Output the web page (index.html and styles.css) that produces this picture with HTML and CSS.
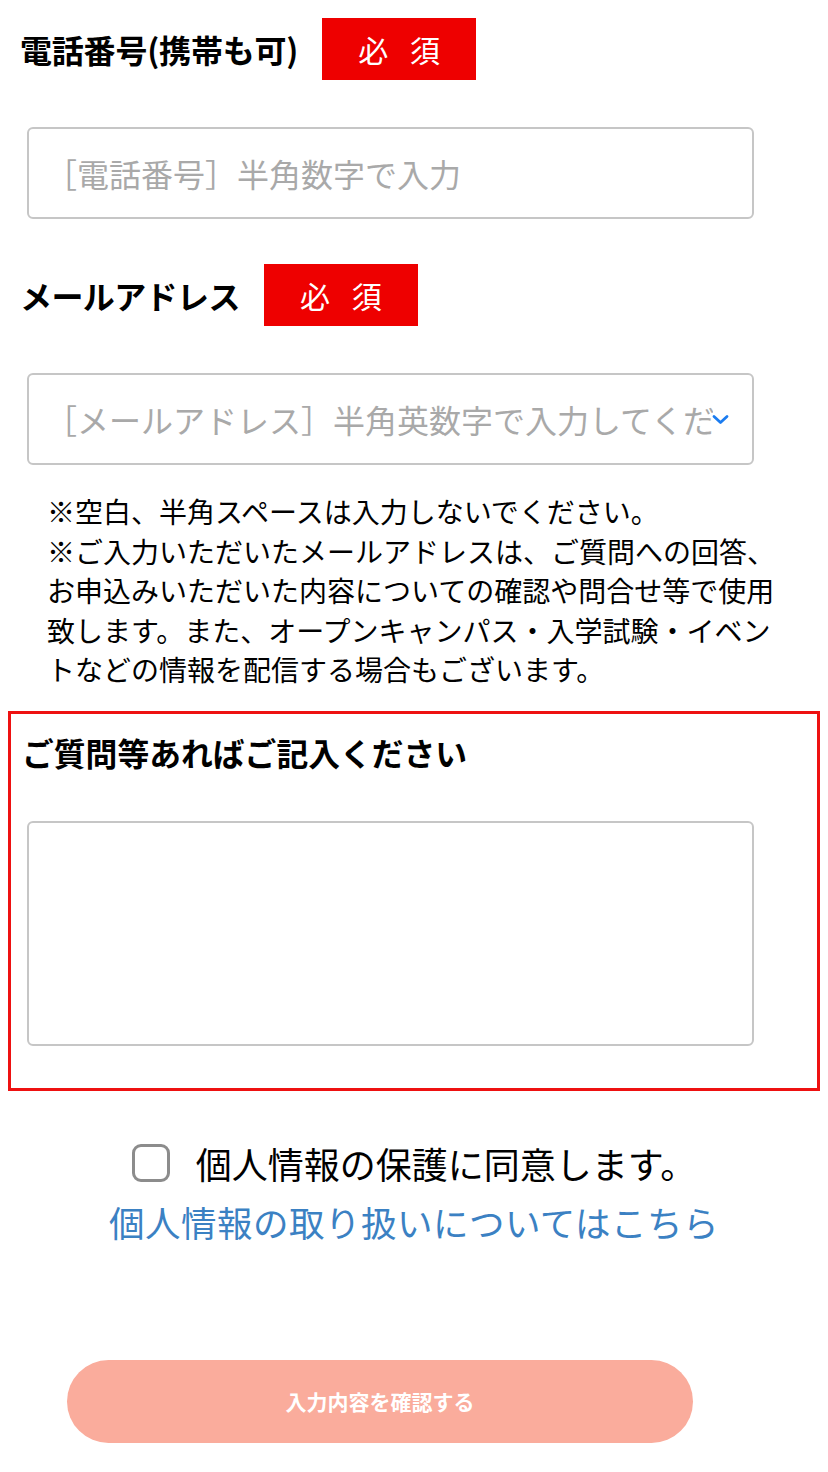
FILE: index.html
```html
<!DOCTYPE html>
<html lang="ja">
<head>
  <meta charset="UTF-8">
  <title>お問い合わせフォーム</title>
  <link rel="stylesheet" href="styles.css">
</head>
<body>

<form class="entry_form">

  <!-- 電話番号 -->
  <div class="item_head">
    <h4 class="item_label">電話番号(携帯も可)</h4>
    <span class="badge_req">必 須</span>
  </div>
  <div class="input_box">
    <span class="placeholder">［電話番号］半角数字で入力</span>
  </div>

  <!-- メールアドレス -->
  <div class="item_head second">
    <h4 class="item_label">メールアドレス</h4>
    <span class="badge_req">必 須</span>
  </div>
  <div class="input_box select_box">
    <span class="placeholder">［メールアドレス］半角英数字で入力してください</span>
    <svg class="chevron" width="17" height="11" viewBox="0 0 17 11"><path d="M2 2.5 L8.5 8.5 L15 2.5" fill="none" stroke="#1b7cf0" stroke-width="2.8" stroke-linecap="round" stroke-linejoin="round"/></svg>
  </div>
  <p class="note">
    <span>※空白、半角スペースは入力しないでください。</span>
    <span>※ご入力いただいたメールアドレスは、ご質問への回答、</span>
    <span>お申込みいただいた内容についての確認や問合せ等で使用</span>
    <span>致します。また、オープンキャンパス・入学試験・イベン</span>
    <span>トなどの情報を配信する場合もございます。</span>
  </p>

  <!-- ご質問 -->
  <div class="question_area">
    <h4 class="question_title">ご質問等あればご記入ください</h4>
    <div class="textarea_box"></div>
  </div>

  <!-- 同意 -->
  <div class="agree_row">
    <span class="check"></span>
    <span class="agree_text">個人情報の保護に同意します。</span>
  </div>
  <p class="privacy_link"><a href="#">個人情報の取り扱いについてはこちら</a></p>

  <button type="button" class="btn_confirm">入力内容を確認する</button>
</form>

</body>
</html>
```

FILE: styles.css
```css
body { margin: 0; background: #fff; color: #000; font-family: "Noto Sans CJK JP", "Noto Sans", sans-serif; }
.entry_form { width: 828px; padding-bottom: 30px; }

.item_head { display: flex; align-items: center; gap: 24px; height: 62px; margin-top: 18px; padding-left: 20px; }
.item_head.second { margin-top: 45px; }
.item_label { margin: 0; font-size: 32px; font-weight: bold; line-height: 40px; letter-spacing: -0.2px; }
.item_head.second .item_label { letter-spacing: -0.6px; }
.badge_req { display: flex; align-items: center; justify-content: center; width: 154px; height: 62px; background: #ee0000; color: #fff; font-size: 30px; word-spacing: 15px; line-height: 1; }

.input_box { box-sizing: border-box; display: flex; align-items: center; width: 727px; height: 92px; margin: 47px 0 0 27px; padding: 0 16px; border: 2px solid #c6c6c6; border-radius: 6px; }
.placeholder { flex: 1; white-space: nowrap; color: #a9a9a9; font-size: 32px; line-height: 48px; }
.select_box .placeholder { flex: none; width: 668px; overflow: hidden; }
.chevron { flex: none; margin-left: -1px; }

.note { margin: 27px 0 0; padding-left: 47px; font-size: 28px; line-height: 39.5px; }
.note span { display: block; white-space: nowrap; }

.question_area { margin: 21px 8px 0; padding: 18px 0 42px 11px; border: 3px solid #ee1111; }
.question_title { margin: 0; font-size: 31.8px; font-weight: bold; line-height: 40px; }
.textarea_box { box-sizing: border-box; width: 727px; height: 225px; margin: 49px 0 0 5px; border: 2px solid #c6c6c6; border-radius: 6px; }

.agree_row { display: flex; align-items: center; justify-content: center; gap: 26px; margin-top: 50px; height: 44px; }
.check { box-sizing: border-box; width: 38px; height: 38px; border: 3px solid #8c8c8c; border-radius: 9px; }
.agree_text { font-size: 36px; line-height: 44px; }
.privacy_link { margin: 15px 0 0; text-align: center; font-size: 35.5px; line-height: 44px; }
.privacy_link a { color: #3b81c3; text-decoration: none; letter-spacing: 0.5px; }

.btn_confirm { display: block; width: 626px; height: 83px; margin: 116px 0 0 67px; border: none; border-radius: 42px; background: #faac9c; color: #fff; font-family: inherit; font-size: 21px; font-weight: bold; }
```
